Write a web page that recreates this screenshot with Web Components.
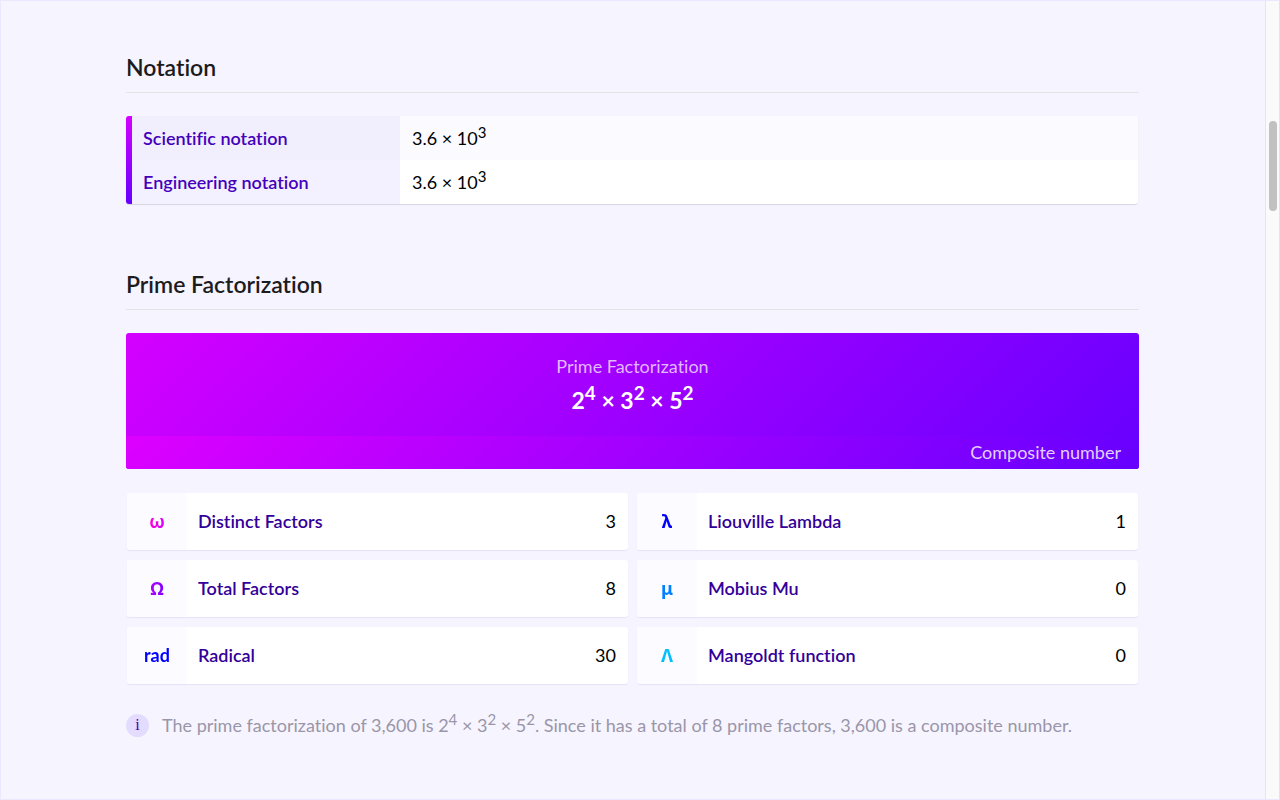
<!DOCTYPE html>
<html lang="en">
<head>
<meta charset="utf-8">
<title>3,600 – Number properties</title>
<style>
  html, body { margin: 0; }
  body { background: #f6f4ff; color: #000; font: 18px/24px Lato, "Liberation Sans", sans-serif; font-variant-ligatures: none; }
</style>
</head>
<body>
<app-page>
  <page-section heading="Notation">
    <notation-table></notation-table>
  </page-section>
  <page-section heading="Prime Factorization">
    <result-banner label="Prime Factorization" note="Composite number">2<sup>4</sup> × 3<sup>2</sup> × 5<sup>2</sup></result-banner>
    <fact-grid>
      <fact-card symbol="ω" value="3" style="--from:#ff00d4;--to:#d400ff">Distinct Factors</fact-card>
      <fact-card symbol="λ" value="1" style="--from:#0000ff;--to:#0000ff">Liouville Lambda</fact-card>
      <fact-card symbol="Ω" value="8" style="--from:#b300ff;--to:#8000ff">Total Factors</fact-card>
      <fact-card symbol="μ" value="0" style="--from:#0080ff;--to:#0080ff">Mobius Mu</fact-card>
      <fact-card symbol="rad" value="30" style="--from:#0000ff;--to:#0000ff;--symbol-font:Lato">Radical</fact-card>
      <fact-card symbol="Λ" value="0" style="--from:#00bfff;--to:#00bfff">Mangoldt function</fact-card>
    </fact-grid>
    <info-note>The prime factorization of 3,600 is 2<sup>4</sup> × 3<sup>2</sup> × 5<sup>2</sup>. Since it has a total of 8 prime factors, 3,600 is a composite number.</info-note>
  </page-section>
</app-page>
<script>
  function define(name, render) {
    customElements.define(name, class extends HTMLElement {
      constructor() {
        super();
        this.attachShadow({ mode: "open" });
      }
      connectedCallback() {
        this.shadowRoot.innerHTML = render(this);
      }
    });
  }

  define("app-page", () => `
    <style>
      :host { display: flex; min-height: 100vh; box-sizing: border-box; border: 1px solid #ebe7ff; border-right-color: #e4e4e4; }
      main { flex: 1; min-width: 0; padding: 46px 126px 0 125px; display: flex; flex-direction: column; gap: 60px; }
    </style>
    <main><slot></slot></main>
    <scroll-rail></scroll-rail>`);

  define("scroll-rail", () => `
    <style>
      :host { display: block; width: 13px; background: #fafafa; border-left: 1px solid #e6e6ea; }
      div { width: 8px; height: 90px; margin: 120px 0 0 3px; border-radius: 4px; background: #c1c1c1; }
    </style>
    <div></div>`);

  define("page-section", el => `
    <style>
      :host { display: block; }
      h2 { margin: 0 0 23px; padding-bottom: 5px; border-bottom: 1px solid #e5e3e6; font-size: 23px; line-height: 40px; font-weight: 600; color: #1c1c1e; }
    </style>
    <section><h2>${el.getAttribute("heading")}</h2><slot></slot></section>`);

  define("notation-table", () => `
    <style>
      :host { display: flex; margin-right: 1px; border-radius: 3px; overflow: hidden; background: linear-gradient(#d400ff, #6600ff) left / 6px 100% no-repeat; box-shadow: 0 1px 1px #d8d5e2; }
      table { flex: 1; margin-left: 6px; border-collapse: collapse; table-layout: fixed; background: #fff; }
      tr { height: 44px; }
      tr:first-child td { background: #fbfaff; }
      th, td { padding: 0 12px; text-align: left; }
      th { width: 245px; padding-left: 11px; background: #f3f0ff; color: #4400bb; font-weight: 600; }
      tr:first-child th { background: #f1eefe; }
      sup { font-size: 15px; line-height: 0; }
    </style>
    <table><tbody>
      <tr><th scope="row">Scientific notation</th><td>3.6 × 10<sup>3</sup></td></tr>
      <tr><th scope="row">Engineering notation</th><td>3.6 × 10<sup>3</sup></td></tr>
    </tbody></table>`);

  define("result-banner", el => `
    <style>
      :host { display: block; border-radius: 3px; overflow: hidden; background: linear-gradient(135deg, #d400ff, #6600ff); color: #fff; text-align: center; }
      .main { padding: 21px 16px 14px; }
      .label { color: #ffffffb8; }
      .value { font-size: 23px; line-height: 44px; font-weight: 700; }
      ::slotted(sup) { font-size: 19px; line-height: 0; }
      .note { padding: 4px 18px 5px; text-align: right; background: linear-gradient(135deg, #dd00ff, #6600ff); color: #ffffffd0; }
    </style>
    <div class="main">
      <div class="label">${el.getAttribute("label")}</div>
      <div class="value"><slot></slot></div>
    </div>
    <div class="note">${el.getAttribute("note")}</div>`);

  define("fact-grid", () => `
    <style>
      :host { display: grid; grid-template-columns: 1fr 1fr; gap: 10px 9px; margin: 24px 1px 0; }
    </style>
    <slot></slot>`);

  define("fact-card", el => `
    <style>
      :host { display: flex; min-height: 57px; align-items: center; border-radius: 3px; overflow: hidden; background: #fff; box-shadow: 0 1px 1px #e6e1fb; }
      .symbol { flex: none; align-self: stretch; display: flex; align-items: center; justify-content: center; width: 60px; padding-bottom: 2px; background: #fcfbff; font-family: var(--symbol-font, "Noto Sans"), sans-serif; font-weight: 700; }
      .symbol span { background: linear-gradient(to right, var(--from), var(--to)); background-clip: text; -webkit-background-clip: text; color: transparent; }
      .name { flex: 1; padding: 0 0 2px 11px; color: #330099; font-weight: 600; }
      .value { padding: 0 12px 2px 0; }
    </style>
    <div class="symbol"><span>${el.getAttribute("symbol")}</span></div>
    <div class="name"><slot></slot></div>
    <div class="value">${el.getAttribute("value")}</div>`);

  define("info-note", () => `
    <style>
      :host { display: flex; align-items: center; gap: 13px; margin-top: 29px; color: #9a96a8; }
      i { flex: none; width: 23px; height: 23px; border-radius: 50%; background: #e3dcff; color: #4400bb; font: 16px/22px "Liberation Serif", serif; text-align: center; }
      p { margin: 0; }
      ::slotted(sup) { font-size: 15px; line-height: 0; }
    </style>
    <i aria-hidden="true">i</i>
    <p><slot></slot></p>`);
</script>
</body>
</html>
